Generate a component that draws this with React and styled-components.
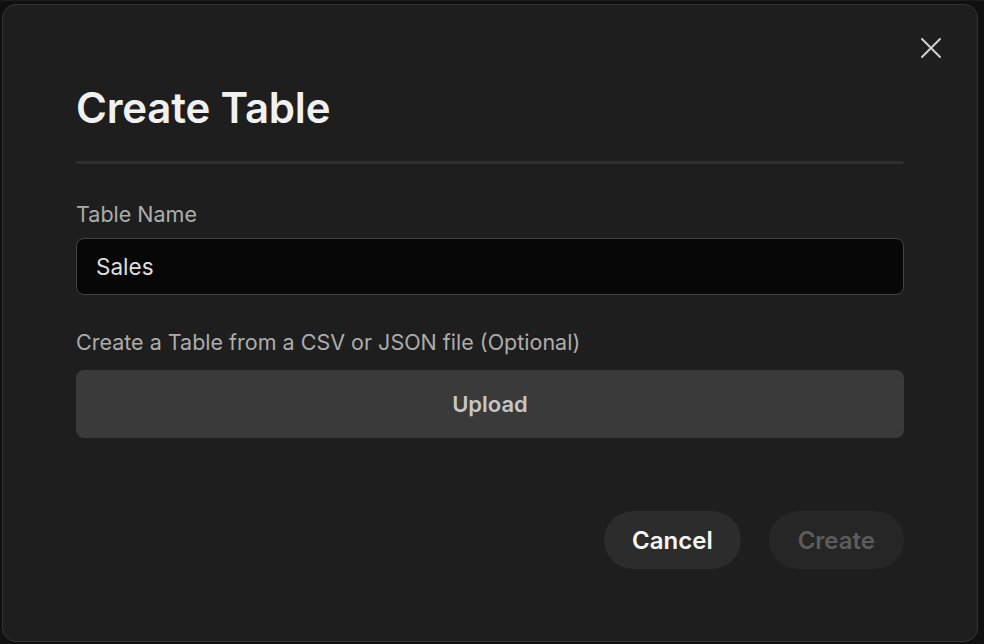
import styled, { createGlobalStyle } from "styled-components"

const GlobalStyle = createGlobalStyle`
  * { box-sizing: border-box; }
  html, body {
    margin: 0;
    padding: 0;
    background: #101010;
    font-family: Inter, "Noto Sans", sans-serif;
  }
`

const Backdrop = styled.div`
  width: 984px;
  height: 644px;
  padding: 3px 6px 3px 2px;
  background: #101010;
  border-top: 1px solid #1c1c1c;
`

const Dialog = styled.div`
  position: relative;
  width: 976px;
  height: 638px;
  background: #1e1e1e;
  border: 1px solid #343434;
  border-radius: 14px;
  padding: 77px 73px 0 73px;
  display: flex;
  flex-direction: column;
`

const CloseButton = styled.button`
  position: absolute;
  top: 30px;
  right: 33px;
  width: 26px;
  height: 26px;
  padding: 0;
  border: none;
  background: transparent;
  display: flex;
  align-items: center;
  justify-content: center;
  cursor: pointer;
`

const Title = styled.h1`
  margin: 0;
  font-size: 42px;
  line-height: 52px;
  font-weight: 600;
  color: #f1f1f1;
  letter-spacing: -0.2px;
`

const Divider = styled.div`
  height: 3px;
  border-radius: 2px;
  background: #2f2f2f;
  margin: 27px 0 37px;
`

const Field = styled.div`
  display: flex;
  flex-direction: column;
  gap: ${(p) => p.$gap}px;
  margin-bottom: ${(p) => p.$after}px;
`

const Label = styled.label`
  font-size: 21.5px;
  line-height: 26px;
  color: #acacac;
  font-weight: 400;
`

const Input = styled.input`
  height: 57px;
  width: 100%;
  background: #070707;
  border: 1px solid #444;
  border-radius: 8px;
  padding: 0 19px;
  font-family: inherit;
  font-size: 22.5px;
  color: #dedede;
  outline: none;
`

const UploadButton = styled.button`
  height: 68px;
  width: 100%;
  border: none;
  border-radius: 8px;
  background: #3a3a3a;
  color: #c6c6c6;
  font-family: inherit;
  font-size: 22px;
  font-weight: 600;
  cursor: pointer;
`

const Footer = styled.div`
  display: flex;
  justify-content: flex-end;
  gap: 28px;
  margin-top: 73px;
`

const PillButton = styled.button`
  height: 58px;
  padding: 0 ${(p) => p.$pad}px;
  border: none;
  border-radius: 29px;
  background: ${(p) => (p.$disabled ? "#262626" : "#2c2c2c")};
  color: ${(p) => (p.$disabled ? "#5c5c5c" : "#f6f6f6")};
  font-family: inherit;
  font-size: 24px;
  font-weight: 600;
  cursor: ${(p) => (p.$disabled ? "default" : "pointer")};
`

const CloseIcon = () => (
  <svg width="22" height="22" viewBox="0 0 22 22" fill="none">
    <path d="M2 2L20 20M20 2L2 20" stroke="#cfcfcf" strokeWidth="2" strokeLinecap="round" />
  </svg>
)

export default function App() {
  return (
    <>
      <GlobalStyle />
      <Backdrop>
        <Dialog>
          <CloseButton aria-label="Close">
            <CloseIcon />
          </CloseButton>
          <Title>Create Table</Title>
          <Divider />
          <Field $gap={11} $after={34}>
            <Label>Table Name</Label>
            <Input defaultValue="Sales" />
          </Field>
          <Field $gap={15} $after={0}>
            <Label>Create a Table from a CSV or JSON file (Optional)</Label>
            <UploadButton>Upload</UploadButton>
          </Field>
          <Footer>
            <PillButton $pad={28}>Cancel</PillButton>
            <PillButton $pad={29} $disabled>Create</PillButton>
          </Footer>
        </Dialog>
      </Backdrop>
    </>
  )
}
